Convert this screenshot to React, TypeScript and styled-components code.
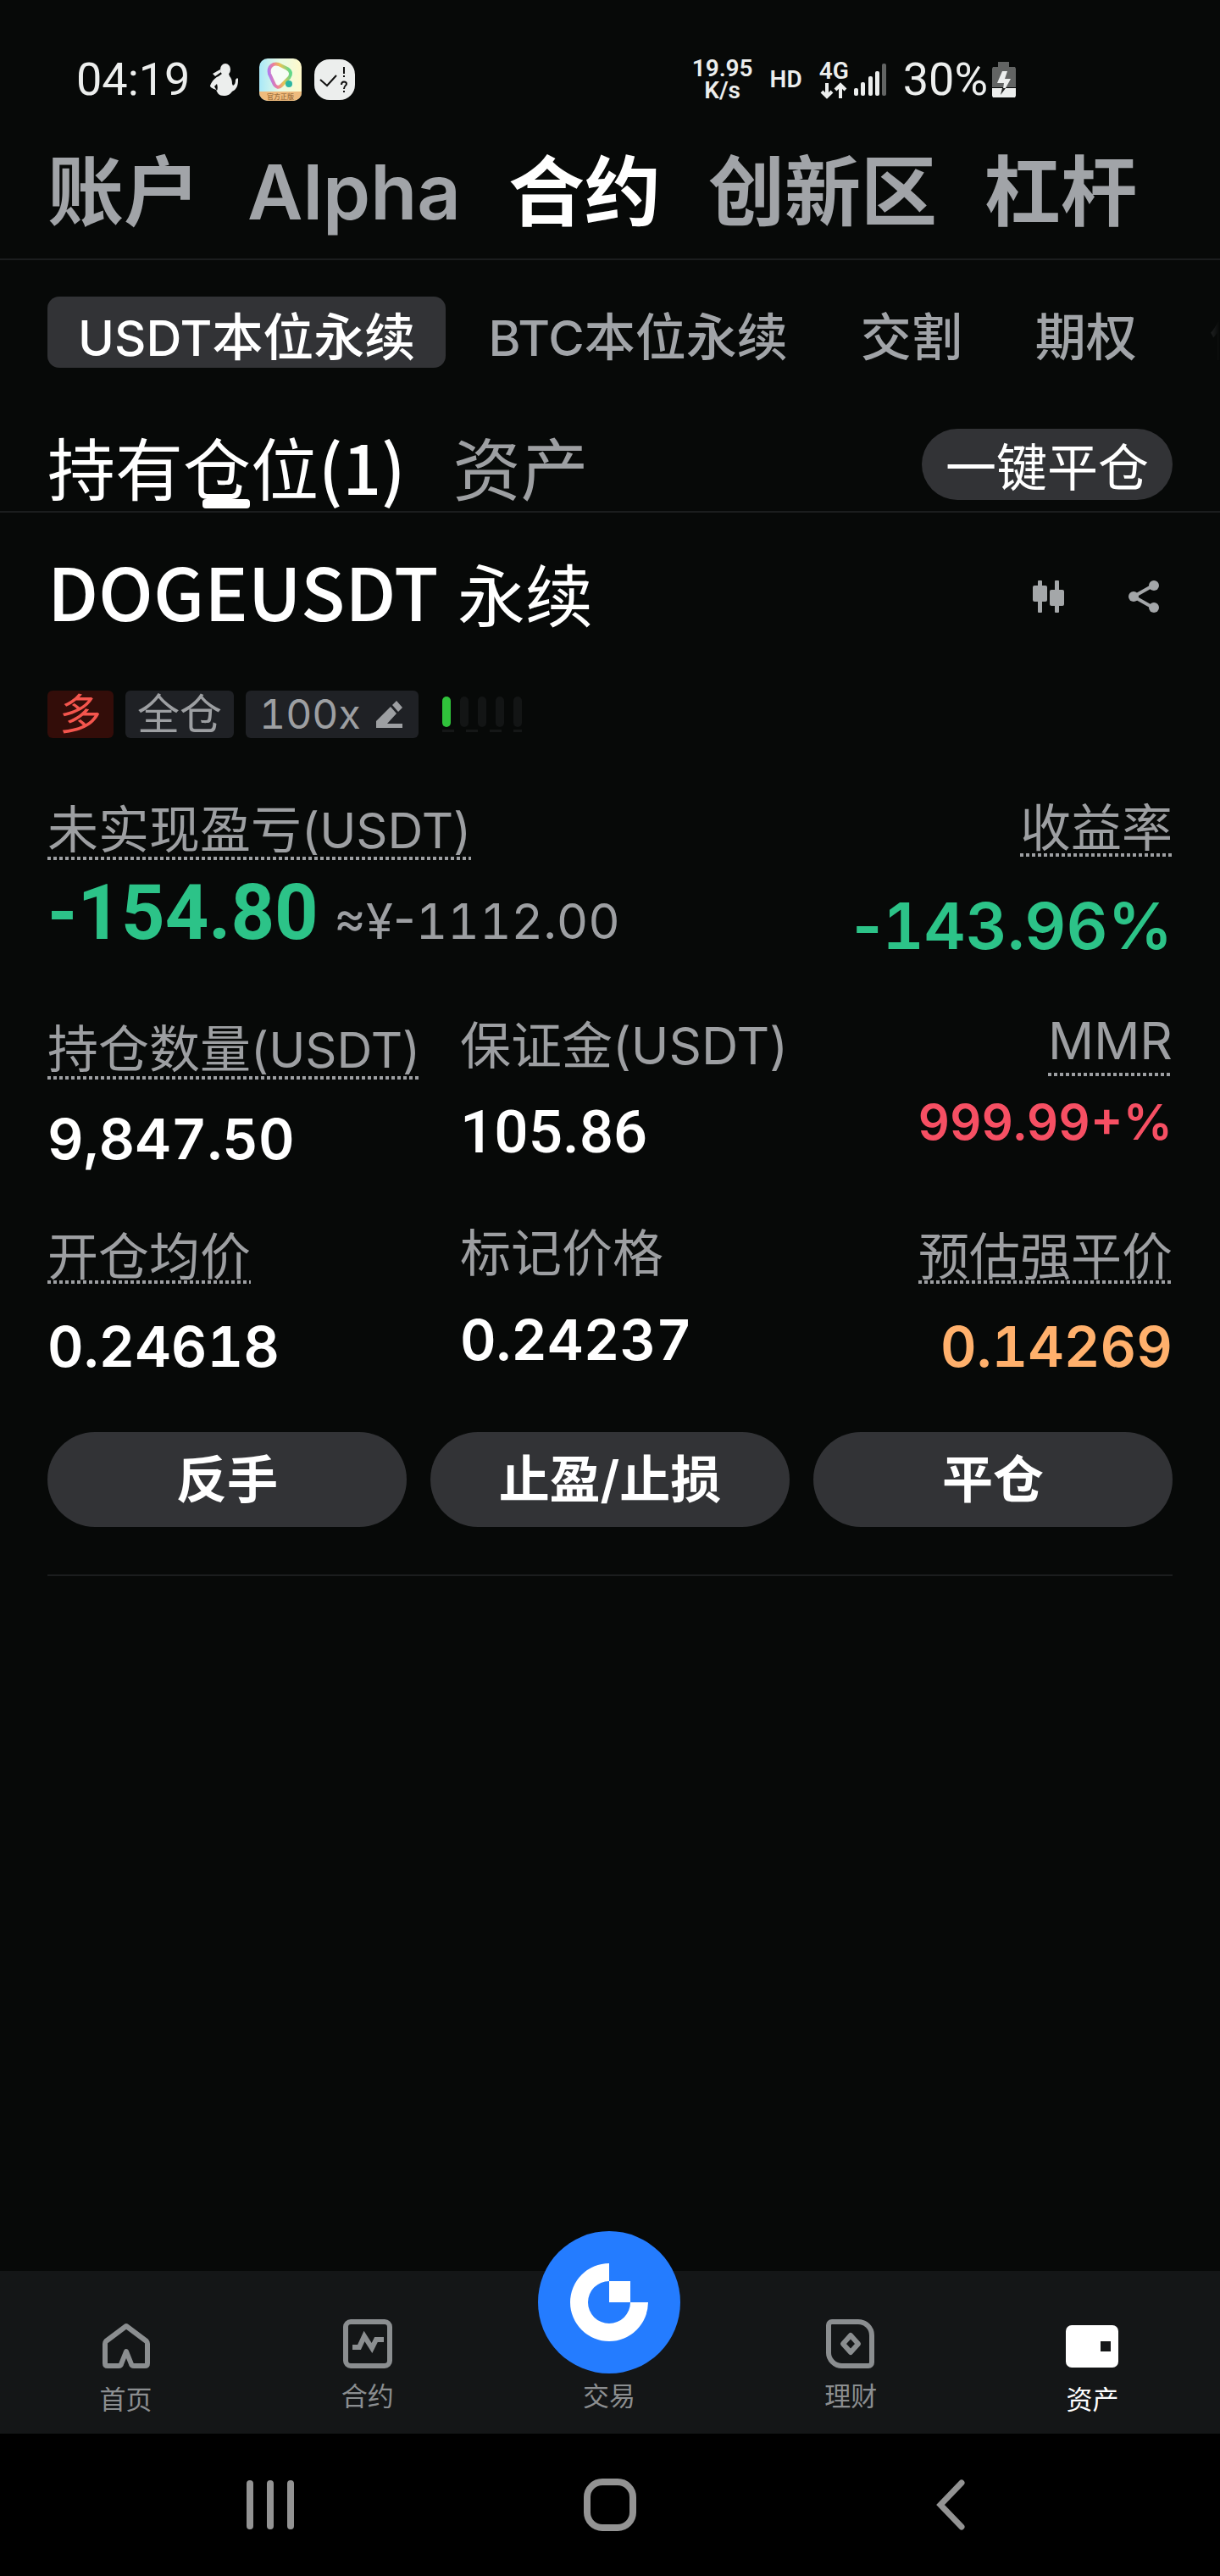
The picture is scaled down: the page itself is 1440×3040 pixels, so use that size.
import React from "react";
import styled, { createGlobalStyle, css } from "styled-components";

const ui = `"Inter", "Noto Sans CJK SC", sans-serif`;
const cjk = `"Noto Sans CJK SC", sans-serif`;
const roboto = `"Roboto", "Noto Sans CJK SC", sans-serif`;

const color = {
  page: "#070908",
  bar: "#141617",
  line: "#1b1d1e",
  pill: "#323336",
  tag: "#1f2125",
  muted: "#a1a4a8",
  label: "#9d9fa2",
  green: "#2cc388",
  red: "#f64f63",
  orange: "#ffb06c",
  nav: "#8b8e90",
};

const GlobalStyle = createGlobalStyle`
  * { box-sizing: border-box; }
  body { margin: 0; background: ${color.page}; color: #fff; font-family: ${ui}; }
  button { border: 0; margin: 0; padding: 0; background: none; color: inherit; font: inherit; cursor: pointer; white-space: nowrap; }
  a { color: inherit; text-decoration: none; }
  svg { display: block; flex: none; }
`;

const Screen = styled.div`
  display: flex;
  flex-direction: column;
  min-height: 100vh;
  overflow: hidden;
`;

const StatusBar = styled.header`
  display: flex;
  align-items: center;
  justify-content: space-between;
  height: 148px;
  padding: 40px 240px 0 90px;
  font-family: ${roboto};
  color: #eceeed;
`;

const StatusGroup = styled.div<{ $gap: number }>`
  display: flex;
  align-items: center;
  gap: ${(p) => p.$gap}px;
`;

const StatusText = styled.span`
  font-size: 54px;
  line-height: 64px;
`;

const StatusSmall = styled.span`
  font-size: 28px;
  line-height: 26px;
  font-weight: 600;
  text-align: center;
`;

const TopTabs = styled.nav`
  display: flex;
  gap: 56px;
  padding: 0 56px;
  border-bottom: 2px solid ${color.line};
`;

const TopTab = styled.button<{ $active?: boolean }>`
  font-size: 90px;
  line-height: 157px;
  font-weight: 600;
  color: ${(p) => (p.$active ? "#fff" : color.muted)};
`;

const SubTabs = styled.nav`
  display: flex;
  gap: 14px;
  padding: 43px 0 0 56px;
  overflow: hidden;
  mask-image: linear-gradient(to right, #000 calc(100% - 72px), transparent);
`;

const SubTab = styled.button<{ $active?: boolean }>`
  flex: none;
  padding: 12px 36px 0;
  border-radius: 14px;
  font-size: 60px;
  line-height: 72px;
  font-weight: 500;
  color: ${(p) => (p.$active ? "#fff" : color.muted)};
  background: ${(p) => (p.$active ? color.pill : "transparent")};
`;

const Coin = styled.span`
  font-size: 58px;
  line-height: 0;
`;

const HoldingBar = styled.div`
  display: flex;
  align-items: flex-start;
  justify-content: space-between;
  padding: 72px 56px 0;
  border-bottom: 2px solid ${color.line};
`;

const HoldingTabs = styled.div`
  display: flex;
  gap: 56px;
`;

const HoldingTab = styled.button<{ $active?: boolean }>`
  position: relative;
  font-size: 80px;
  line-height: 97px;
  color: ${(p) => (p.$active ? "#fff" : color.label)};
  ${(p) =>
    p.$active &&
    css`
      &::after {
        content: "";
        position: absolute;
        left: calc(50% - 28px);
        bottom: 3px;
        width: 56px;
        height: 11px;
        border-radius: 4px;
        background: #fff;
      }
    `}
`;

const Count = styled.span`
  font-family: ${cjk};
  font-weight: 500;
  line-height: 0;
`;

const CloseAll = styled.button`
  padding: 8px 28px 0;
  border-radius: 42px;
  background: ${color.pill};
  font-size: 60px;
  line-height: 76px;
`;

const Position = styled.main`
  flex: 1;
  padding: 49px 56px 0;
`;

const TitleRow = styled.div`
  display: flex;
  align-items: center;
  justify-content: space-between;
`;

const Title = styled.h1`
  margin: 0;
  font-size: 80px;
  line-height: 100px;
  font-weight: 400;
`;

const Ticker = styled.span`
  font-family: ${cjk};
  font-size: 86px;
  font-weight: 500;
  line-height: 0;
`;

const TitleActions = styled.div`
  display: flex;
  gap: 56px;
  padding-right: 6px;
`;

const IconButton = styled.button`
  display: grid;
  place-items: center;
  width: 56px;
  height: 56px;
`;

const TagRow = styled.div`
  display: flex;
  align-items: center;
  gap: 14px;
  margin-top: 61px;
`;

const tagBox = css`
  display: flex;
  align-items: center;
  height: 56px;
  border-radius: 6px;
  padding: 0 14px;
  font-size: 50px;
  line-height: 56px;
`;

const Tag = styled.span<{ $long?: boolean }>`
  ${tagBox}
  color: ${(p) => (p.$long ? "#f4554d" : color.label)};
  background: ${(p) => (p.$long ? "#330d09" : color.tag)};
`;

const LeverageTag = styled.button`
  ${tagBox}
  gap: 18px;
  padding: 0 18px 0 16px;
  font-size: 48px;
  font-variant-numeric: tabular-nums;
  color: ${color.label};
  background: ${color.tag};
`;

const RiskMeter = styled.div`
  display: flex;
  gap: 11px;
  margin-left: 14px;
  padding-bottom: 6px;
  background: repeating-linear-gradient(to right, #151717 0 14px, transparent 14px 28px) bottom / 100% 3px no-repeat;
`;

const RiskBar = styled.i<{ $on?: boolean }>`
  width: 10px;
  height: 36px;
  border-radius: 5px;
  background: ${(p) => (p.$on ? "#30c33b" : "#131515")};
`;

const Summary = styled.section`
  display: flex;
  justify-content: space-between;
  margin-top: 72px;
`;

const Metrics = styled.section<{ $top: number }>`
  display: grid;
  grid-template-columns: 11fr 9fr 10fr;
  margin-top: ${(p) => p.$top}px;
`;

const Cell = styled.div<{ $end?: boolean; $gap: number }>`
  display: flex;
  flex-direction: column;
  align-items: ${(p) => (p.$end ? "flex-end" : "flex-start")};
  gap: ${(p) => p.$gap}px;
  white-space: nowrap;
`;

const Label = styled.span<{ $line: number; $dotted?: boolean; $drop?: number }>`
  padding-bottom: ${(p) => p.$drop ?? 0}px;
  font-size: 60px;
  line-height: ${(p) => p.$line}px;
  color: ${color.label};
  ${(p) =>
    p.$dotted &&
    css`
      background: repeating-linear-gradient(to right, ${color.label} 0 4px, transparent 4px 7px) bottom / 100% 4px no-repeat;
    `}
`;

const Value = styled.span<{ $tone?: string }>`
  font-size: 66px;
  line-height: 80px;
  font-weight: 600;
  font-variant-numeric: tabular-nums;
  color: ${(p) => p.$tone ?? "#fff"};
`;

const Affix = styled.span`
  font-variant-numeric: normal;
`;

const MarginValue = styled(Value)`
  font-family: ${roboto};
  font-size: 71px;
  font-weight: 500;
`;

const RatioValue = styled(Value)`
  font-size: 58px;
  line-height: 48px;
`;

const RoeValue = styled(Value)`
  font-size: 76px;
  line-height: 124px;
`;

const PnlRow = styled.div`
  display: flex;
  align-items: baseline;
  gap: 18px;
`;

const Pnl = styled.strong`
  font-family: ${roboto};
  font-size: 90px;
  line-height: 88px;
  font-weight: 700;
  color: ${color.green};
`;

const PnlFiat = styled.span`
  font-size: 58px;
  line-height: 88px;
  font-variant-numeric: tabular-nums;
  color: ${color.label};
`;

const Actions = styled.div`
  display: grid;
  grid-template-columns: repeat(3, 1fr);
  gap: 28px;
  margin-top: 61px;
  padding-bottom: 56px;
  border-bottom: 2px solid ${color.line};
`;

const Action = styled.button`
  border-radius: 56px;
  background: ${color.pill};
  font-size: 60px;
  line-height: 112px;
  font-weight: 600;
`;

const TabBar = styled.nav`
  display: flex;
  align-items: flex-end;
  height: 192px;
  padding: 0 8px 0 6px;
  background: ${color.bar};
`;

const TabItem = styled.a<{ $active?: boolean; $raised?: boolean; $low?: boolean }>`
  flex: 1;
  display: flex;
  flex-direction: column;
  align-items: center;
  gap: ${(p) => (p.$raised ? 7 : 12)}px;
  padding-bottom: ${(p) => (p.$low ? 20 : 24)}px;
  font-size: 31px;
  line-height: 40px;
  color: ${(p) => (p.$active ? "#fff" : color.nav)};
`;

const SystemNav = styled.nav`
  display: flex;
  height: 168px;
  padding: 0 118px;
  background: #000;
  color: #939393;
`;

const SystemKey = styled.button`
  flex: 1;
  display: grid;
  place-items: center;
`;

const PersonIcon = () => (
  <svg width="34" height="38" viewBox="0 0 34 38" fill="currentColor" aria-hidden="true">
    <ellipse cx="18" cy="7" rx="6" ry="7" />
    <path d="M12 7 3 12l3 3 7-5z" />
    <path d="M14 12h8l1 3c2 2 3 5 3 9l1 2c2-1 3-3 3-7l2-2 1 1v2c0 6-2 11-7 13-2 3-5 5-10 5-6 0-7-3-9-7C2 29 0 28 0 26c2-5 5-9 10-11zM8 24l-3 3 3 5c1-2 1-5 0-8z" fillRule="evenodd" />
  </svg>
);

const AppBadge = () => (
  <svg width="50" height="50" viewBox="0 0 50 50" aria-hidden="true">
    <defs>
      <linearGradient id="badgeBg" x1="0" y1="0" x2="1" y2="0">
        <stop offset="0" stopColor="#a8e8f8" />
        <stop offset="0.5" stopColor="#e9fbe6" />
        <stop offset="1" stopColor="#fff9c9" />
      </linearGradient>
      <linearGradient id="badgeRing" x1="0" y1="0.6" x2="1" y2="0.4">
        <stop offset="0" stopColor="#b07af0" />
        <stop offset="0.3" stopColor="#ee7f9a" />
        <stop offset="0.6" stopColor="#e8c455" />
        <stop offset="1" stopColor="#5fd88a" />
      </linearGradient>
      <clipPath id="badgeClip"><rect width="50" height="50" rx="10" /></clipPath>
    </defs>
    <g clipPath="url(#badgeClip)">
      <rect width="50" height="50" fill="url(#badgeBg)" />
      <path d="M12 18C10 9 17 5 23 7l10 5c5 3 5 7 2 11l-9 9c-3 3-6 2-8-1z" fill="#f6fdf6" stroke="url(#badgeRing)" strokeWidth="4" />
      <circle cx="35" cy="30" r="4" fill="#2cb6a2" />
      <rect y="39" width="50" height="11" fill="#eebb7d" />
      <text x="25" y="48" textAnchor="middle" fontSize="8" fontFamily="Noto Sans CJK SC" fill="#8a5a2b">官方正版</text>
    </g>
  </svg>
);

const CheckBadge = () => (
  <svg width="48" height="48" viewBox="0 0 48 48" fill="none" stroke="#111" strokeWidth="2" aria-hidden="true">
    <rect width="48" height="48" rx="18" fill="#eceeed" stroke="none" />
    <path d="m7 24 8 7 11-12M35 9v8M35 19v2M32 30c0-5 6-4 6-1 0 2-3 2-3 6M35 37v2" />
  </svg>
);

const SignalIcon = () => (
  <svg width="38" height="38" viewBox="0 0 38 38" fill="currentColor" aria-hidden="true">
    <rect x="0" y="29" width="5" height="9" rx="2" />
    <rect x="8" y="22" width="5" height="16" rx="2" />
    <rect x="17" y="15" width="5" height="23" rx="2" />
    <rect x="25" y="9" width="5" height="29" rx="2" />
    <rect x="33" y="0" width="5" height="38" rx="2" opacity="0.4" />
  </svg>
);

const NetworkBox = styled.div`
  display: flex;
  flex-direction: column;
  align-items: center;
`;

const DataArrows = () => (
  <svg width="32" height="20" viewBox="0 0 32 20" fill="none" stroke="currentColor" strokeWidth="4" aria-hidden="true">
    <path d="M8 1v15M2 11l6 6 6-6M24 19V4M18 9l6-6 6 6" />
  </svg>
);

const BatteryIcon = () => (
  <svg width="30" height="42" viewBox="0 0 30 42" aria-hidden="true">
    <path d="M8 0h13v6H8z" fill="#626463" />
    <path d="M2 6h26l1 2v22H1V8z" fill="#626463" />
    <path d="M1 31h28v9l-1 2H2l-1-2z" fill="#eceeed" />
    <path d="M13 11h6l-3 9h7L13 38l2-13H7z" fill="#eceeed" />
    <path d="M13 31h4l-6 8z" fill="#222" />
  </svg>
);

const CandlesIcon = () => (
  <svg width="38" height="38" viewBox="0 0 38 38" fill="#a4a7a9" aria-hidden="true">
    <rect x="6" y="0" width="5" height="38" rx="1" />
    <rect x="0" y="6" width="17" height="19" rx="2" />
    <rect x="26" y="0" width="5" height="38" rx="1" />
    <rect x="20" y="11" width="17" height="19" rx="2" />
  </svg>
);

const ShareIcon = () => (
  <svg width="38" height="40" viewBox="0 0 38 40" fill="#a4a7a9" aria-hidden="true">
    <path d="M30 7 7 20l23 13" fill="none" stroke="#a4a7a9" strokeWidth="4" />
    <circle cx="31" cy="7" r="6" />
    <circle cx="7" cy="20" r="6" />
    <circle cx="31" cy="33" r="6" />
  </svg>
);

const EditIcon = () => (
  <svg width="32" height="32" viewBox="0 0 32 32" fill="currentColor" aria-hidden="true">
    <path d="m24 0 7 8-5 5-7-8zM17 7l7 8-11 12h18v5H0v-8z" />
  </svg>
);

const HomeIcon = () => (
  <svg width="64" height="64" viewBox="0 0 64 64" fill="none" stroke="currentColor" strokeWidth="6" strokeLinejoin="round" aria-hidden="true">
    <path d="M32 9 8 27c-1 1-1 2-1 3v23c0 2 1 3 3 3h13c2 0 3-1 3-2l6-15 6 15c0 1 1 2 3 2h13c2 0 3-1 3-3V30c0-1 0-2-1-3z" />
  </svg>
);

const FuturesIcon = () => (
  <svg width="64" height="64" viewBox="0 0 64 64" fill="none" stroke="currentColor" strokeWidth="6" aria-hidden="true">
    <rect x="6" y="8" width="52" height="52" rx="6" />
    <path d="M14 38h8l6-13 9 14 5-10h9" />
  </svg>
);

const EarnIcon = () => (
  <svg width="64" height="64" viewBox="0 0 64 64" fill="none" stroke="currentColor" strokeWidth="6" strokeLinejoin="round" aria-hidden="true">
    <path d="M10 8h31a16 16 0 0 1 16 16v32a4 4 0 0 1-4 4H23A16 16 0 0 1 6 43V12a4 4 0 0 1 4-4z" />
    <path d="m32 24 9 10-9 10-9-10z" />
  </svg>
);

const WalletIcon = () => (
  <svg width="64" height="64" viewBox="0 0 64 64" aria-hidden="true">
    <rect x="1" y="8" width="62" height="50" rx="7" fill="currentColor" />
    <path d="M42 27h12v12H42z" fill={color.bar} />
  </svg>
);

const TradeLogo = () => (
  <svg width="168" height="168" viewBox="0 0 168 168" aria-hidden="true">
    <circle cx="84" cy="84" r="84" fill="#247cff" />
    <path d="M84 38a46 46 0 1 0 46 46h-21a25 25 0 1 1-25-25z" fill="#fff" />
    <path d="M84 59h25v25H84z" fill="#fff" />
  </svg>
);

const RecentsIcon = () => (
  <svg width="56" height="60" viewBox="0 0 56 60" fill="none" stroke="currentColor" strokeWidth="8" strokeLinecap="round" aria-hidden="true">
    <path d="M4 5v50M28 5v50M52 5v50" />
  </svg>
);

const HomeKeyIcon = () => (
  <svg width="62" height="62" viewBox="0 0 62 62" fill="none" stroke="currentColor" strokeWidth="8" aria-hidden="true">
    <rect x="4" y="4" width="54" height="54" rx="18" />
  </svg>
);

const BackIcon = () => (
  <svg width="36" height="60" viewBox="0 0 36 60" fill="none" stroke="currentColor" strokeWidth="7" strokeLinecap="round" strokeLinejoin="miter" aria-hidden="true">
    <path d="M32 4 7 30l25 26" />
  </svg>
);

export default function App() {
  return (
    <Screen>
      <GlobalStyle />
      <StatusBar>
        <StatusGroup $gap={24}>
          <StatusText>04:19</StatusText>
          <PersonIcon />
          <StatusGroup $gap={15}>
            <AppBadge />
            <CheckBadge />
          </StatusGroup>
        </StatusGroup>
        <StatusGroup $gap={20}>
          <StatusSmall>19.95<br />K/s</StatusSmall>
          <StatusSmall>HD</StatusSmall>
          <StatusGroup $gap={6}>
            <NetworkBox>
              <StatusSmall>4G</StatusSmall>
              <DataArrows />
            </NetworkBox>
            <SignalIcon />
          </StatusGroup>
          <StatusGroup $gap={4}>
            <StatusText>30%</StatusText>
            <BatteryIcon />
          </StatusGroup>
        </StatusGroup>
      </StatusBar>

      <TopTabs>
        <TopTab>账户</TopTab>
        <TopTab>Alpha</TopTab>
        <TopTab $active>合约</TopTab>
        <TopTab>创新区</TopTab>
        <TopTab>杠杆</TopTab>
      </TopTabs>

      <SubTabs>
        <SubTab $active><Coin>USDT</Coin>本位永续</SubTab>
        <SubTab><Coin>BTC</Coin>本位永续</SubTab>
        <SubTab>交割</SubTab>
        <SubTab>期权</SubTab>
        <SubTab>体</SubTab>
      </SubTabs>

      <HoldingBar>
        <HoldingTabs>
          <HoldingTab $active>持有仓位<Count>(1)</Count></HoldingTab>
          <HoldingTab>资产</HoldingTab>
        </HoldingTabs>
        <CloseAll>一键平仓</CloseAll>
      </HoldingBar>

      <Position>
        <TitleRow>
          <Title><Ticker>DOGEUSDT</Ticker> 永续</Title>
          <TitleActions>
            <IconButton aria-label="K线"><CandlesIcon /></IconButton>
            <IconButton aria-label="分享"><ShareIcon /></IconButton>
          </TitleActions>
        </TitleRow>

        <TagRow>
          <Tag $long>多</Tag>
          <Tag>全仓</Tag>
          <LeverageTag>100x<EditIcon /></LeverageTag>
          <RiskMeter>
            <RiskBar $on />
            <RiskBar />
            <RiskBar />
            <RiskBar />
            <RiskBar />
          </RiskMeter>
        </TagRow>

        <Summary>
          <Cell $gap={19}>
            <Label $line={72} $dotted>未实现盈亏<Coin>(USDT)</Coin></Label>
            <PnlRow>
              <Pnl>-154.80</Pnl>
              <PnlFiat><Affix>≈¥-</Affix>1112.00</PnlFiat>
            </PnlRow>
          </Cell>
          <Cell $end $gap={19}>
            <Label $line={68} $dotted>收益率</Label>
            <RoeValue $tone={color.green}><Affix>-</Affix>143.96<Affix>%</Affix></RoeValue>
          </Cell>
        </Summary>

        <Metrics $top={48}>
          <Cell $gap={30}>
            <Label $line={72} $dotted>持仓数量<Coin>(USDT)</Coin></Label>
            <Value>9,847.50</Value>
          </Cell>
          <Cell $gap={30}>
            <Label $line={64}>保证金(USDT)</Label>
            <MarginValue>105.86</MarginValue>
          </Cell>
          <Cell $end $gap={30}>
            <Label $line={52} $drop={16} $dotted>MMR</Label>
            <RatioValue $tone={color.red}>999.99<Affix>+%</Affix></RatioValue>
          </Cell>
        </Metrics>

        <Metrics $top={67}>
          <Cell $gap={34}>
            <Label $line={64} $dotted>开仓均价</Label>
            <Value>0.24618</Value>
          </Cell>
          <Cell $gap={34}>
            <Label $line={56}>标记价格</Label>
            <Value>0.24237</Value>
          </Cell>
          <Cell $end $gap={34}>
            <Label $line={64} $dotted>预估强平价</Label>
            <Value $tone={color.orange}>0.14269</Value>
          </Cell>
        </Metrics>

        <Actions>
          <Action>反手</Action>
          <Action>止盈/止损</Action>
          <Action>平仓</Action>
        </Actions>
      </Position>

      <TabBar>
        <TabItem href="#home" $low><HomeIcon />首页</TabItem>
        <TabItem href="#futures"><FuturesIcon />合约</TabItem>
        <TabItem href="#trade" $raised><TradeLogo />交易</TabItem>
        <TabItem href="#earn"><EarnIcon />理财</TabItem>
        <TabItem href="#assets" $active $low><WalletIcon />资产</TabItem>
      </TabBar>

      <SystemNav>
        <SystemKey aria-label="最近任务"><RecentsIcon /></SystemKey>
        <SystemKey aria-label="主屏幕"><HomeKeyIcon /></SystemKey>
        <SystemKey aria-label="返回"><BackIcon /></SystemKey>
      </SystemNav>
    </Screen>
  );
}
